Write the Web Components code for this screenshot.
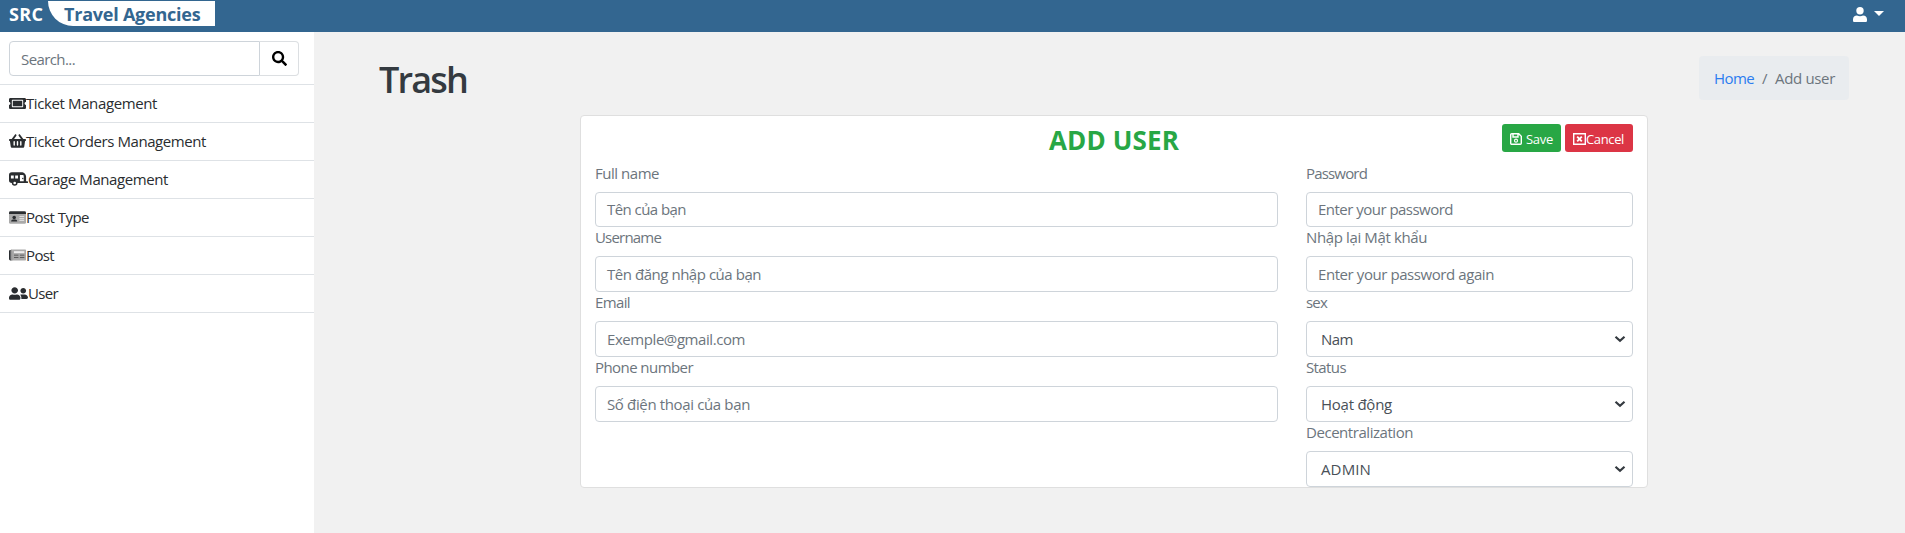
<!DOCTYPE html>
<html lang="en">
<head>
<meta charset="utf-8">
<title>Travel Agencies</title>
<style>
html,body{margin:0;height:100%}
body{font-family:"Open Sans","Noto Sans",sans-serif;font-size:15px;color:#212529;background:#f1f1f1;overflow:hidden}
</style>
</head>
<body>
<admin-page></admin-page>
<script>
const define=(name,html,after)=>customElements.define(name,class extends HTMLElement{
  constructor(){super();this.attachShadow({mode:'open'});}
  connectedCallback(){
    const t=document.createElement('template');
    t.innerHTML=typeof html==='function'?html(this):html;
    this.shadowRoot.replaceChildren(t.content.cloneNode(true));
    if(after)after(this);
  }
});

/* Single-line text whose tracking is adjusted to a given width */
define('fit-text','<style>:host{display:inline-block;white-space:nowrap}span{display:inline-block}</style><span><slot></slot></span>',el=>{
  const w=+el.getAttribute('w'),s=el.shadowRoot.querySelector('span');
  const n=[...el.textContent].length;
  const now=s.getBoundingClientRect().width;
  if(w&&now){s.style.letterSpacing=((w-now)/n)+'px';}
});

const icons={
 search:['0 0 512 512','<path d="M505 442.700 405.300 343c-4.500-4.500-10.600-7-17-7H372c27.600-35.300 44-79.700 44-128C416 93.100 322.900 0 208 0S0 93.100 0 208s93.100 208 208 208c48.300 0 92.700-16.400 128-44v16.300c0 6.400 2.500 12.500 7 17l99.700 99.700c9.400 9.400 24.600 9.400 33.900 0l28.300-28.300c9.400-9.400 9.400-24.600.1-34zM208 336c-70.700 0-128-57.200-128-128 0-70.700 57.200-128 128-128 70.700 0 128 57.200 128 128 0 70.700-57.200 128-128 128z"/>'],
 ticket:['0 32 576 448','<path d="M128 160h320v192H128V160zm400 96c0 26.510 21.490 48 48 48v96c0 26.510-21.490 48-48 48H48c-26.510 0-48-21.490-48-48v-96c26.510 0 48-21.490 48-48s-21.490-48-48-48v-96c0-26.510 21.490-48 48-48h480c26.510 0 48 21.490 48 48v96c-26.510 0-48 21.490-48 48zm-48-104c0-13.255-10.745-24-24-24H120c-13.255 0-24 10.745-24 24v208c0 13.255 10.745 24 24 24h336c13.255 0 24-10.745 24-24V152z"/>'],
 basket:['0 24 576 464','<path d="M576 216v16c0 13.255-10.745 24-24 24h-8l-26.113 182.788C514.509 462.435 494.257 480 470.370 480H105.630c-23.887 0-44.139-17.565-47.518-41.212L32 256h-8c-13.255 0-24-10.745-24-24v-16c0-13.255 10.745-24 24-24h67.341l106.780-146.821c10.395-14.292 30.407-17.453 44.701-7.058 14.293 10.395 17.453 30.408 7.058 44.701L170.477 192h235.046L326.120 82.821c-10.395-14.292-7.234-34.306 7.059-44.701 14.291-10.395 34.306-7.235 44.701 7.058L484.659 192H552c13.255 0 24 10.745 24 24zM312 392V280c0-13.255-10.745-24-24-24s-24 10.745-24 24v112c0 13.255 10.745 24 24 24s24-10.745 24-24zm112 0V280c0-13.255-10.745-24-24-24s-24 10.745-24 24v112c0 13.255 10.745 24 24 24s24-10.745 24-24zm-224 0V280c0-13.255-10.745-24-24-24s-24 10.745-24 24v112c0 13.255 10.745 24 24 24s24-10.745 24-24z"/>'],
 caravan:['0 24 640 496','<path fill-rule="evenodd" d="M96 32h320c89 0 160 71 160 160v160h40a24 24 0 0 1 24 24v16a24 24 0 0 1-24 24H288a96 96 0 0 1-192 0 96 96 0 0 1-96-96V128a96 96 0 0 1 96-96zM64 144v112h96V144zM208 144v112h96V144zM368 128v224h128V160a32 32 0 0 0-32-32z"/><circle cx="464" cy="256" r="24"/><circle cx="192" cy="416" r="44" fill="#fff"/>'],
 idcard:['0 24 576 464','<path fill="#aaa" d="M0 112h576v320a48 48 0 0 1-48 48H48a48 48 0 0 1-48-48z"/><path d="M48 32h480a48 48 0 0 1 48 48v48H0V80a48 48 0 0 1 48-48z"/><circle cx="176" cy="256" r="60"/><path d="M72 400c0-46 30-72 64-72h80c34 0 64 26 64 72z"/><path fill="#eee" d="M352 208h160v32H352zm0 64h160v32H352zm0 64h160v32H352z"/>'],
 news:['0 44 576 424','<path fill="#aaa" d="M112 64h440a24 24 0 0 1 24 24v336a24 24 0 0 1-24 24H80z"/><path d="M44 80a44 44 0 0 0-44 44v272a52 52 0 0 0 52 52h40a50 50 0 0 1-32-52V80z"/><path fill="#999" d="M64 64h50v384H92a40 40 0 0 1-28-40z"/><path fill="#eee" d="M168 120h352v70H168z"/><path fill="#444" d="M168 248h152v30H168zm200 0h152v30H368zM168 336h152v30H168zm200 0h152v30H368z"/>'],
 users:['0 24 640 464','<path d="M192 256c61.900 0 112-50.100 112-112S253.900 32 192 32 80 82.100 80 144s50.100 112 112 112zm76.800 32h-8.300c-20.800 10-43.900 16-68.500 16s-47.600-6-68.500-16h-8.300C51.600 288 0 339.600 0 403.200V432c0 26.500 21.500 48 48 48h288c26.500 0 48-21.500 48-48v-28.800c0-63.600-51.600-115.200-115.200-115.200zM480 256c53 0 96-43 96-96s-43-96-96-96-96 43-96 96 43 96 96 96zm48 32h-3.800c-13.900 4.800-28.600 8-44.200 8s-30.300-3.200-44.200-8H432c-20.400 0-39.200 5.900-55.700 15.400 24.400 26.300 39.700 61.200 39.700 99.800v38.400c0 2.200-.5 4.300-.6 6.400H592c26.500 0 48-21.500 48-48 0-61.900-50.100-112-112-112z"/>'],
 user:['0 0 14 15','<circle cx="7" cy="3.700" r="3.700"/><path d="M0 12.500C0 10 1.700 8.500 4 8.500c1.800.9 4.200.9 6 0 2.300 0 4 1.500 4 4v1c0 1-.6 1.500-1.500 1.500h-11C.6 15 0 14.500 0 13.500z"/>'],
 save:['0 0 12 12','<path fill="none" stroke="currentColor" stroke-width="1.400" d="M1.700.7h7l2.600 2.600v7a1 1 0 0 1-1 1H1.700a1 1 0 0 1-1-1V1.700a1 1 0 0 1 1-1zM3 1v3h5V1"/><circle cx="6" cy="7.700" r="1.500" fill="none" stroke="currentColor" stroke-width="1.200"/>'],
 cancel:['0 0 13 12','<path fill="none" stroke="currentColor" stroke-width="1.400" d="M.7.700h11.600v10.600H.7z"/><path fill="none" stroke="currentColor" stroke-width="1.900" d="m4.200 3.700 4.600 4.600m0-4.600L4.200 8.300"/>'],
 chevron:['0 0 12 8','<path fill="none" stroke="currentColor" stroke-width="2.200" d="m1.500 1.700 4.500 4 4.500-4"/>']
};
define('ui-icon',el=>{
  const [vb,body]=icons[el.getAttribute('name')];
  return `<style>:host{display:block;flex:none}svg{display:block;width:100%;height:100%}</style><svg viewBox="${vb}" preserveAspectRatio="${el.hasAttribute('stretch')?'none':'xMidYMid meet'}" fill="currentColor">${body}</svg>`;
});

define('top-bar',`<style>
:host{display:flex;height:32px;background:#336690;color:#fff;font-weight:700;font-size:18px;justify-content:space-between;box-sizing:border-box}
.brand{display:flex;padding-left:9px;line-height:29px}
.tab{box-sizing:border-box;margin:1px 0 0 5px;width:167px;height:25px;padding-left:16px;background:#fff;color:#336690;border-bottom-left-radius:25px;line-height:27px}
.src{width:34px}
.account{display:flex;gap:7px;padding:7px 21px 0 0}
.account ui-icon{width:14px;height:15px}
.caret{margin-top:4px;width:0;height:0;border:5px solid transparent;border-top-color:#fff;border-bottom:0}
</style>
<div class="brand"><div class="src"><fit-text w="34.500">SRC</fit-text></div><div class="tab"><fit-text w="136.500">Travel Agencies</fit-text></div></div>
<div class="account"><ui-icon name="user"></ui-icon><div class="caret"></div></div>`);

define('nav-item',el=>`<style>
:host{display:flex;align-items:center;height:38px;box-sizing:border-box;border-bottom:1px solid #dee2e6;padding-left:9px;color:#2a2d30;font-size:15px}
ui-icon{width:${el.getAttribute('iw')||17}px;height:${el.getAttribute('ih')||13}px;margin-top:-1px}
::slotted(fit-text){margin-top:-1px}
</style><ui-icon stretch name="${el.getAttribute('icon')}"></ui-icon><slot></slot>`);

define('side-bar',`<style>
:host{display:block;width:314px;background:#fff}
.search{display:flex;height:53px;box-sizing:border-box;padding:9px 0 0 9px;border-bottom:1px solid #dee2e6}
.box{box-sizing:border-box;height:35px;width:251px;border:1px solid #ced4da;border-radius:4px 0 0 4px;padding-left:11px;line-height:34px;color:#6c757d}
.btn{box-sizing:border-box;height:35px;width:39px;border:1px solid #dcdfe2;border-left:0;border-radius:0 4px 4px 0;display:flex;align-items:center;justify-content:center;color:#000}
.btn ui-icon{width:15px;height:15px}
</style>
<div class="search"><div class="box"><fit-text w="54">Search...</fit-text></div><div class="btn"><ui-icon name="search"></ui-icon></div></div>
<nav-item icon="ticket"><fit-text w="131">Ticket Management</fit-text></nav-item>
<nav-item icon="basket" ih="14"><fit-text w="180">Ticket Orders Management</fit-text></nav-item>
<nav-item icon="caravan" iw="19" ih="14"><fit-text w="140">Garage Management</fit-text></nav-item>
<nav-item icon="idcard"><fit-text w="63">Post Type</fit-text></nav-item>
<nav-item icon="news" ih="12"><fit-text w="28">Post</fit-text></nav-item>
<nav-item icon="users" iw="19"><fit-text w="30">User</fit-text></nav-item>`);

define('form-field',el=>{
  const sel=el.hasAttribute('select');
  return `<style>
:host{display:block;height:64.900px}
.label{height:29px;line-height:21.600px;color:#6c757d}
.box{display:flex;align-items:center;justify-content:space-between;box-sizing:border-box;height:35.400px;border:1px solid #ced4da;border-radius:4px;background:#fff;padding:0 6px 0 ${sel?14:11}px;color:${sel?'#495057':'#6c757d'}}
ui-icon{width:12px;height:8px;color:#343a40}
</style><div class="label"><fit-text w="${el.getAttribute('lw')}">${el.getAttribute('label')}</fit-text></div>
<div class="box"><fit-text w="${el.getAttribute('vw')}">${el.getAttribute('value')}</fit-text>${sel?'<ui-icon name="chevron"></ui-icon>':''}</div>`;
});

define('action-button',el=>`<style>
:host{display:flex;align-items:center;box-sizing:border-box;height:28px;border-radius:3px;color:#fff;font-size:13px;padding:1px 0 0 8px;width:${el.getAttribute('width')}px;background:${el.getAttribute('color')};gap:${el.getAttribute('gap')}px}
ui-icon{height:12px;width:${el.getAttribute('iw')}px}
</style><ui-icon name="${el.getAttribute('icon')}"></ui-icon><slot></slot>`);

define('user-card',`<style>
:host{display:block;box-sizing:border-box;width:1068px;height:373px;background:#fff;border:1px solid #dfdfdf;border-radius:4px;padding:0 14px}
header{display:grid;grid-template-columns:1fr auto 1fr;height:46.600px}
h2{grid-column:2;margin:6px 0 0;font-size:26px;line-height:36px;font-weight:700;color:#28a745;height:36px}
.actions{display:flex;justify-content:flex-end;gap:4px;padding-top:8px}
.cols{display:grid;grid-template-columns:683px 327px;column-gap:28px}
</style>
<header><h2><fit-text w="130">ADD USER</fit-text></h2>
<div class="actions"><action-button icon="save" color="#28a745" width="59" gap="4" iw="12"><fit-text w="27">Save</fit-text></action-button><action-button icon="cancel" color="#dc3545" width="68" gap="0" iw="13"><fit-text w="38">Cancel</fit-text></action-button></div></header>
<div class="cols"><div>
<form-field label="Full name" lw="64" value="Tên của bạn" vw="79"></form-field>
<form-field label="Username" lw="66" value="Tên đăng nhập của bạn" vw="154"></form-field>
<form-field label="Email" lw="35" value="Exemple@gmail.com" vw="138"></form-field>
<form-field label="Phone number" lw="98" value="Số điện thoại của bạn" vw="143"></form-field>
</div><div>
<form-field label="Password" lw="61" value="Enter your password" vw="135"></form-field>
<form-field label="Nhập lại Mật khẩu" lw="121" value="Enter your password again" vw="176"></form-field>
<form-field select label="sex" lw="21" value="Nam" vw="32"></form-field>
<form-field select label="Status" lw="40" value="Hoạt động" vw="71"></form-field>
<form-field select label="Decentralization" lw="107" value="ADMIN" vw="50"></form-field>
</div></div>`);

define('bread-crumb',`<style>
:host{display:flex;align-items:center;box-sizing:border-box;width:150px;height:44px;margin-top:24px;padding:0 15px 0;background:#e9ecef;border-radius:4px;color:#6c757d}
a{color:#2b7cf0}.sep{margin:0 7px 0 8px}
</style><a><fit-text w="40">Home</fit-text></a><span class="sep"><fit-text w="6">/</fit-text></span><fit-text w="60">Add user</fit-text>`);

define('admin-page',`<style>
:host{display:flex;flex-direction:column;height:100vh}
.body{display:flex;flex:1}
main{flex:1}
.head{display:flex;justify-content:space-between;height:83px;padding:0 56px 0 65px}
h1{margin:21px 0 0;font-size:36px;line-height:54px;font-weight:600;color:#343a40}
user-card{margin-left:266px}
</style><top-bar></top-bar><div class="body"><side-bar></side-bar><main><div class="head"><h1><fit-text w="88">Trash</fit-text></h1><bread-crumb></bread-crumb></div><user-card></user-card></main></div>`);
</script>
</body>
</html>
